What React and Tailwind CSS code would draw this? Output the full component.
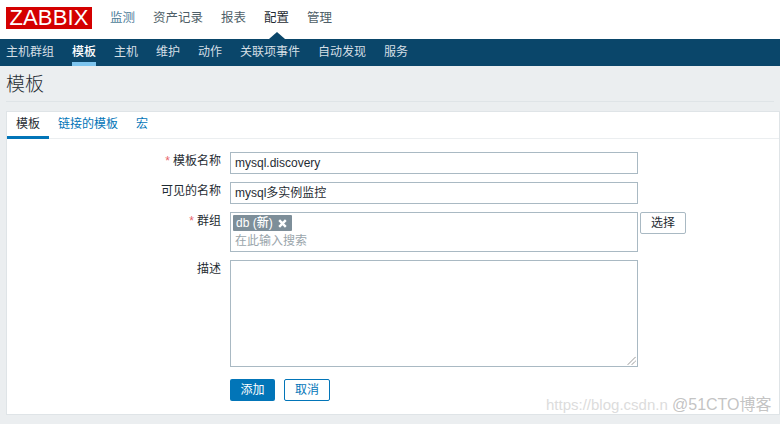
const font = { fontFamily: '"Liberation Sans", "Noto Sans CJK SC", sans-serif' };

const topMenu = ['监测', '资产记录', '报表', '配置', '管理'];
const subMenu = ['主机群组', '模板', '主机', '维护', '动作', '关联项事件', '自动发现', '服务'];

function Label({ required, children }) {
  return (
    <div className="w-[214px] pt-[1px] text-right text-[12px] leading-[16px] text-[#1f2c33]">
      {required && <span className="mr-[3px] text-[#e8646a]">*</span>}
      {children}
    </div>
  );
}

export default function App() {
  return (
    <div style={font} className="relative h-[424px] w-[780px] overflow-hidden bg-[#ebeef0]">
      {/* top menu */}
      <div className="relative flex h-[39px] items-start bg-white pl-[6px]">
        <div className="mt-[7px] flex h-[22px] w-[86px] items-center justify-center bg-[#d40000] text-[22px] leading-none tracking-[0.1px] text-white">ZABBIX</div>
        <div className="ml-[18px] mt-[10px] flex gap-[18px] text-[12.5px] leading-[16px]">
          {topMenu.map((m) => (
            <span key={m} className={m === '配置' ? 'text-[#1f2c33]' : m === '监测' ? 'text-[#4d7d99]' : 'text-[#4f5f68]'}>{m}</span>
          ))}
        </div>
        <div className="absolute bottom-0 left-[269px] h-0 w-0 border-x-[8px] border-b-[7px] border-x-transparent border-b-[#0a466a]"></div>
      </div>

      {/* sub menu */}
      <div className="flex h-[27px] gap-[18px] bg-[#0a466a] pl-[6px] text-[12px] leading-[26px]">
        {subMenu.map((m) => (
          <span key={m} className={m === '模板' ? 'h-[27px] border-b-[4px] border-[#7dc4ee] font-medium text-white' : 'text-[#d5dfe5]'}>{m}</span>
        ))}
      </div>

      {/* title */}
      <div className="mx-[6px] h-[36px] border-b border-[#dfe4e7] pt-[6px] text-[19px] font-light leading-[26px] text-[#1f2c33]">模板</div>

      {/* card */}
      <div className="ml-[6px] mt-[9px] h-[304px] border border-[#dfe4e7] bg-white">
        <div className="flex h-[27px] gap-[18px] border-b border-[#ebeef0] text-[12px] leading-[24px]">
          <div className="flex h-[27px] w-[42px] justify-center border-b-[3px] border-[#0275b8] text-[#1f2c33]">模板</div>
          <span className="text-[#0275b8] -ml-[9px]">链接的模板</span>
          <span className="text-[#0275b8]">宏</span>
        </div>

        <div className="flex flex-col gap-[8px] pt-[13px]">
          <div className="flex items-start gap-[9px]">
            <Label required>模板名称</Label>
            <div className="h-[22px] w-[408px] border border-[#a9b9c3] pl-[4px] text-[12px] leading-[21px] text-[#1f2c33]">mysql.discovery</div>
          </div>
          <div className="flex items-start gap-[9px]">
            <Label>可见的名称</Label>
            <div className="h-[22px] w-[408px] border border-[#a9b9c3] pl-[4px] text-[12px] leading-[21px] text-[#1f2c33]">mysql多实例监控</div>
          </div>
          <div className="flex items-start gap-[9px]">
            <Label required>群组</Label>
            <div className="h-[40px] w-[408px] border border-[#a9b9c3] pl-[2px] pt-[2px]">
              <div className="flex h-[16px] w-[59px] items-center gap-[5px] rounded-[1px] bg-[#7d8e99] pl-[3px] text-[12px] font-medium leading-none text-white">
                <span>db (新)</span>
                <svg width="9" height="9" viewBox="0 0 9 9"><path d="M1.2 1.2 7.8 7.8M7.8 1.2 1.2 7.8" stroke="#fff" strokeWidth="2.4" /></svg>
              </div>
              <div className="pl-[2px] pt-[2px] text-[12px] leading-[16px] text-[#9aa5ab]">在此输入搜索</div>
            </div>
            <div className="-ml-[7px] flex h-[22px] w-[46px] items-center justify-center rounded-[2px] border border-[#a9b9c3] text-[12px] text-[#1f2c33]">选择</div>
          </div>
          <div className="flex items-start gap-[9px]">
            <Label>描述</Label>
            <div className="relative h-[107px] w-[408px] border border-[#a9b9c3]">
              <svg className="absolute bottom-[1px] right-[1px]" width="9" height="9" viewBox="0 0 9 9"><path d="M1 8.5 8.5 1M5 8.5 8.5 5" stroke="#555" strokeWidth="1" strokeDasharray="1 0.5" /></svg>
            </div>
          </div>
          <div className="ml-[223px] mt-[4px] flex gap-[9px] text-[12px]">
            <div className="flex h-[22px] w-[45px] items-center justify-center rounded-[2px] bg-[#0275b8] text-white">添加</div>
            <div className="flex h-[22px] w-[46px] items-center justify-center rounded-[2px] border border-[#0275b8] text-[#0275b8]">取消</div>
          </div>
        </div>
      </div>

      {/* watermarks */}
      <div className="absolute left-[546px] top-[395px] whitespace-nowrap text-[15px] leading-[20px] text-[#dcdcdc]">https://blog.csdn.n</div>
      <div className="absolute left-[672px] top-[395px] whitespace-nowrap text-[16px] leading-[20px] text-[#b4b4b4]/80">@51CTO博客</div>
    </div>
  );
}
